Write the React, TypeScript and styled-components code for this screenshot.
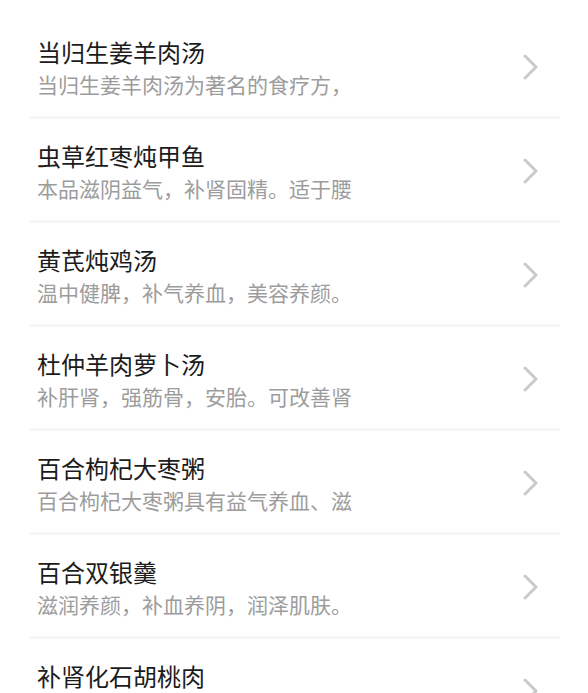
import React from "react";
import styled, { createGlobalStyle } from "styled-components";

const GlobalStyle = createGlobalStyle`
  html, body {
    margin: 0;
    padding: 0;
    background: #ffffff;
  }
  body {
    font-family: "Noto Sans CJK SC", "Noto Sans", sans-serif;
    overflow: hidden;
  }
`;

const Page = styled.div`
  width: 588px;
  height: 693px;
  overflow: hidden;
  background: #ffffff;
  padding-top: 15px;
  box-sizing: border-box;
`;

const List = styled.ul`
  list-style: none;
  margin: 0;
  padding: 0;
`;

const Item = styled.li`
  display: flex;
  flex-direction: column;
`;

const Row = styled.div`
  display: flex;
  align-items: center;
  justify-content: space-between;
  padding: 22px 48px 18px 37px;
`;

const Texts = styled.div`
  display: flex;
  flex-direction: column;
  min-width: 0;
`;

const Title = styled.div`
  font-size: 24px;
  line-height: 30px;
  color: #1c1c1c;
  white-space: nowrap;
`;

const Subtitle = styled.div`
  margin-top: 3px;
  font-size: 21px;
  line-height: 28px;
  color: #9c9c9c;
  white-space: nowrap;
`;

const Divider = styled.div`
  height: 3px;
  margin: 0 28px 0 30px;
  background: #f6f6f6;
`;

const Chevron = styled.svg`
  width: 18px;
  height: 26px;
  flex-shrink: 0;
  margin-bottom: 2px;
`;

const ChevronIcon = () => (
  <Chevron viewBox="0 0 18 26" fill="none">
    <path
      d="M3 2 L14 13 L3 24"
      stroke="#cacaca"
      strokeWidth="3"
      strokeLinecap="round"
      strokeLinejoin="round"
    />
  </Chevron>
);

const items = [
  { title: "当归生姜羊肉汤", desc: "当归生姜羊肉汤为著名的食疗方，" },
  { title: "虫草红枣炖甲鱼", desc: "本品滋阴益气，补肾固精。适于腰" },
  { title: "黄芪炖鸡汤", desc: "温中健脾，补气养血，美容养颜。" },
  { title: "杜仲羊肉萝卜汤", desc: "补肝肾，强筋骨，安胎。可改善肾" },
  { title: "百合枸杞大枣粥", desc: "百合枸杞大枣粥具有益气养血、滋" },
  { title: "百合双银羹", desc: "滋润养颜，补血养阴，润泽肌肤。" },
  { title: "补肾化石胡桃肉", desc: "补肾强腰，温肺定喘，润肠通便。" },
];

export default function App() {
  return (
    <Page>
      <GlobalStyle />
      <List>
        {items.map((it) => (
          <Item key={it.title}>
            <Row>
              <Texts>
                <Title>{it.title}</Title>
                <Subtitle>{it.desc}</Subtitle>
              </Texts>
              <ChevronIcon />
            </Row>
            <Divider />
          </Item>
        ))}
      </List>
    </Page>
  );
}
